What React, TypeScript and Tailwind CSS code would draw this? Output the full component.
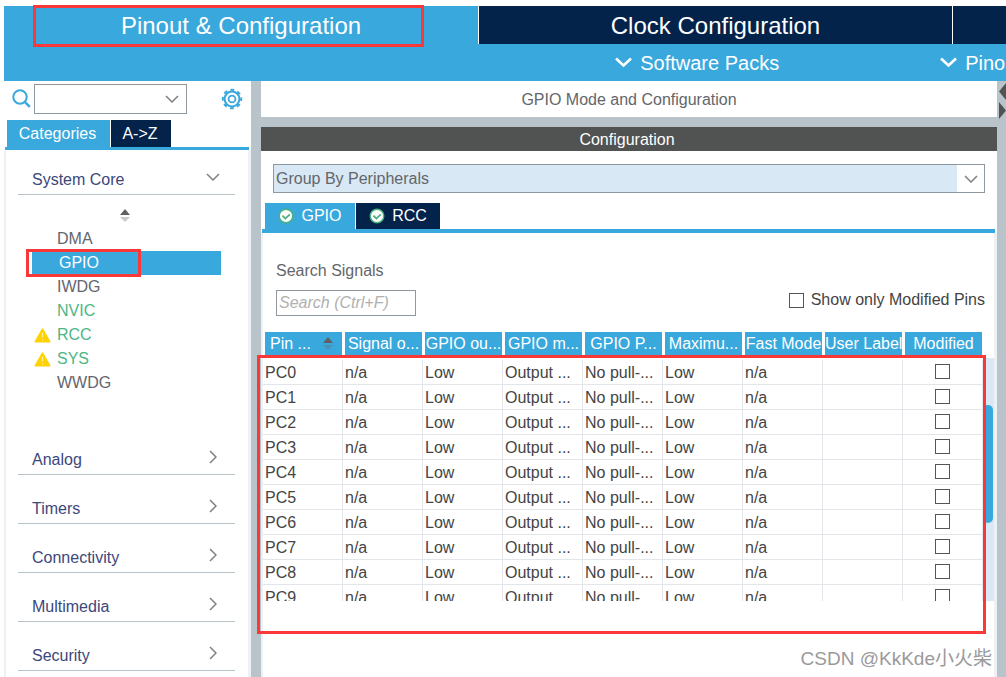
import React from "react";

const categories = ["Analog", "Timers", "Connectivity", "Multimedia", "Security"];

const coreItems = [
  { name: "DMA", state: "idle" },
  { name: "GPIO", state: "selected" },
  { name: "IWDG", state: "idle" },
  { name: "NVIC", state: "enabled" },
  { name: "RCC", state: "warning" },
  { name: "SYS", state: "warning" },
  { name: "WWDG", state: "idle" },
];

const columns = [
  "Pin ...",
  "Signal o...",
  "GPIO ou...",
  "GPIO m...",
  "GPIO P...",
  "Maximu...",
  "Fast Mode",
  "User Label",
  "Modified",
];

const pins = ["PC0", "PC1", "PC2", "PC3", "PC4", "PC5", "PC6", "PC7", "PC8", "PC9"];

const Chevron = ({ className = "", path = "M1 1l6 6 6-6", box = "0 0 14 8", width = 1.5 }) => (
  <svg className={className} viewBox={box} fill="none" stroke="currentColor" strokeWidth={width}>
    <path d={path} />
  </svg>
);

const SortArrows = ({ className = "", lower = "#c9c9c9" }) => (
  <svg className={className} viewBox="0 0 10 14">
    <path d="M5 0l5 6H0z" fill="#5f6264" />
    <path d="M0 8h10l-5 5z" fill={lower} />
  </svg>
);

const WarningIcon = () => (
  <svg className="w-[17px] h-[15px]" viewBox="0 0 17 15">
    <path d="M8.500 1.200L15.800 13.800H1.200z" fill="#ffd200" stroke="#ffd200" strokeWidth="1.600" strokeLinejoin="round" />
    <path d="M8.500 4.500v5M8.500 11v1.600" stroke="#ffeb90" strokeWidth="1.400" />
  </svg>
);

const CheckIcon = () => (
  <svg className="w-4 h-4" viewBox="0 0 16 16">
    <circle cx="8" cy="8" r="6.800" fill="#fff" stroke="#49b27c" strokeWidth="1.400" />
    <path d="M4.400 7.600l3 3L11.800 6.300" fill="none" stroke="#49b27c" strokeWidth="1.800" />
  </svg>
);

const GearIcon = () => (
  <svg className="w-[22px] h-[22px]" viewBox="0 0 22 22" fill="none" stroke="currentColor">
    <circle cx="11" cy="11" r="7.400" strokeWidth="2" />
    <circle cx="11" cy="11" r="3.400" strokeWidth="1.800" />
    {/* eight teeth round the rim */}
    <circle cx="11" cy="11" r="9.200" strokeWidth="2" strokeDasharray="3.800 3.425" strokeDashoffset="1.900" />
  </svg>
);

const Header = () => (
  <header className="ml-1 bg-[#39a8dc] text-white">
    <div className="grid grid-cols-[474fr_474fr_54fr]">
      <button className="relative h-[38px] pt-[2px] text-2xl">
        Pinout &amp; Configuration
        <span className="absolute -top-px left-[29px] right-[54px] h-[42px] border-3 border-[#fb3838]"></span>
      </button>
      <button className="h-[38px] border-l border-white bg-[#03234b] pt-[2px] text-2xl">Clock Configuration</button>
      <button className="h-[38px] border-l border-white bg-[#03234b]" aria-label="Project Manager"></button>
    </div>
    <div className="flex h-[37px] items-center gap-[161px] overflow-hidden whitespace-nowrap pl-[61%] text-xl">
      <button className="flex shrink-0 items-center gap-2">
        <Chevron className="w-[17px] h-[11px]" box="0 0 17 11" path="M1 1.500l7.500 7 7.500-7" width={2.6} />
        Software Packs
      </button>
      <button className="flex shrink-0 items-center gap-2">
        <Chevron className="w-[17px] h-[11px]" box="0 0 17 11" path="M1 1.500l7.500 7 7.500-7" width={2.6} />
        Pinout
      </button>
    </div>
  </header>
);

const Sidebar = () => (
  <aside className="ml-1 flex w-[247px] shrink-0 flex-col">
    <div className="flex h-[39px] items-center pl-2 pr-2 pb-1">
      <svg className="w-5 h-5 text-[#39a8dc]" viewBox="0 0 20 20" fill="none" stroke="currentColor">
        <circle cx="8" cy="8" r="6.700" strokeWidth="2" />
        <path d="M12.800 12.800l5 5" strokeWidth="2.400" />
      </svg>
      <div className="ml-[2px] flex h-[30px] w-[153px] items-center border border-[#8f989e] pr-[7px]">
        <input aria-label="Find peripheral" className="h-full min-w-0 flex-1 px-1 outline-none" />
        <button aria-label="Show matches">
          <Chevron className="w-[14px] h-2 text-[#808080]" />
        </button>
      </div>
      <button className="ml-auto text-[#39a8dc]" aria-label="Settings">
        <GearIcon />
      </button>
    </div>
    <div className="ml-px mr-[2px] flex gap-px border-b-3 border-[#39a8dc] pl-[2px] text-white">
      <button className="h-[27px] w-[103px] bg-[#39a8dc] pr-[2px]">Categories</button>
      <button className="h-[27px] w-[60px] bg-[#03234b] pr-[2px]">A-&gt;Z</button>
    </div>

    <nav className="flex-1 border-l-2 border-r-3 border-[#eef1f4] pl-3 pr-[13px]">
      <button className="flex h-[45px] w-full items-end border-b border-[#b8c4ca] pb-[2px] pl-[14px] pr-[15px] leading-6 text-[#3c477c]">
        System Core
        <Chevron className="mb-[11px] ml-auto w-[14px] h-2 text-[#808080]" />
      </button>
      <div className="flex h-8 items-end justify-center pb-1 pr-1">
        <SortArrows className="w-[10px] h-[14px]" />
      </div>
      <ul className="mb-[31px] ml-[14px] mr-[14px] leading-6">
        {coreItems.map(({ name, state }) => {
          if (state === "selected") {
            return (
              <li key={name} className="relative bg-[#39a8dc] text-white">
                <a href="#gpio" className="block pl-[27px]">{name}</a>
                <span className="absolute -left-[6px] -top-[2px] h-7 w-[115px] border-3 border-[#fb3838]"></span>
              </li>
            );
          }
          return (
            <li key={name} className={state === "idle" ? "text-[#63666f]" : "text-[#4db685]"}>
              <a href={`#${name.toLowerCase()}`} className="flex items-center">
                <span className="w-[25px] pl-[2px]">{state === "warning" && <WarningIcon />}</span>
                {name}
              </a>
            </li>
          );
        })}
      </ul>
      {categories.map((name) => (
        <button
          key={name}
          className="flex h-[49px] w-full items-end border-b border-[#b8c4ca] pb-[2px] pl-[14px] pr-[18px] leading-6 text-[#3c477c]"
        >
          {name}
          <Chevron className="mb-[8px] ml-auto w-2 h-[14px] text-[#808080]" box="0 0 8 14" path="M1 1l6 6-6 6" />
        </button>
      ))}
    </nav>
  </aside>
);

const PinTable = () => (
  <div className="relative">
    <div className="flex h-[269px] overflow-hidden">
      <table className="w-full min-w-0 flex-1 table-fixed border-separate border-spacing-0 self-start text-[#444]">
        <thead>
          <tr>
            {columns.map((name, idx) => (
              <th
                key={name}
                className="h-7 border-b-4 border-l-2 border-r border-white bg-[#39a8dc] p-0 font-normal leading-6 text-white whitespace-nowrap"
              >
                {idx === 0 ? (
                  <span className="flex items-center justify-between pl-[5px] pr-[9px]">
                    {name}
                    <SortArrows className="w-[10px] h-[14px]" lower="#4b91b4" />
                  </span>
                ) : (
                  name
                )}
              </th>
            ))}
          </tr>
        </thead>
        <tbody>
          {pins.map((pin) => (
            <tr key={pin}>
              {[pin, "n/a", "Low", "Output ...", "No pull-...", "Low", "n/a", ""].map((value, idx) => (
                <td key={idx} className="h-[25px] border-b border-r border-[#e2e5e9] p-0 pl-[2px] pt-px leading-[23px] whitespace-nowrap">
                  {value}
                </td>
              ))}
              <td className="h-[25px] border-b border-r border-[#e2e5e9] p-0 pb-[2px]">
                <input
                  type="checkbox"
                  aria-label={`${pin} modified`}
                  className="mx-auto block h-[15px] w-[15px] appearance-none border border-[#555]"
                />
              </td>
            </tr>
          ))}
        </tbody>
      </table>
      <div className="mt-[26px] w-[11px] bg-[#d8e8f5] pr-px pt-[47px]">
        <div className="h-[118px] rounded-md bg-[#39a8dc]"></div>
      </div>
    </div>
    <div className="absolute -left-[6px] right-2 top-[23px] h-[279px] border-3 border-[#fb3838]"></div>
  </div>
);

const ConfigurationPanel = () => (
  <section className="flex flex-1 flex-col bg-white">
    <h2 className="h-6 bg-[#515352] pr-1 text-center leading-[26px] text-white">Configuration</h2>
    <div className="relative mx-3 mt-[13px]">
      <select
        aria-label="Grouping"
        className="block h-[29px] w-full appearance-none border border-[#8f989e] bg-[#d8e8f5] px-[2px] text-[#63666a]"
      >
        <option>Group By Peripherals</option>
      </select>
      <span className="pointer-events-none absolute inset-y-px right-px flex w-[27px] items-center justify-center bg-white">
        <Chevron className="w-[14px] h-2 text-[#808080]" />
      </span>
    </div>
    <div className="ml-px mr-[2px] mt-[10px] flex gap-px border-b-4 border-[#39a8dc] pl-[3px] text-white">
      <button className="flex h-[26px] w-[90px] items-center justify-center gap-[7px] bg-[#39a8dc]">
        <CheckIcon />
        GPIO
      </button>
      <button className="flex h-[26px] w-[84px] items-center justify-center gap-[7px] bg-[#03234b]">
        <CheckIcon />
        RCC
      </button>
    </div>
    <div className="flex-1 border-l-2 border-r-3 border-[#eef1f4] pt-[26px]">
      <div className="flex items-end pl-[13px] pr-[9px]">
        <div>
          <label htmlFor="signals" className="block leading-6 text-[#63666a]">
            Search Signals
          </label>
          <input
            id="signals"
            placeholder="Search (Ctrl+F)"
            className="mt-[7px] block h-[26px] w-[140px] border border-[#8f989e] px-[2px] placeholder:italic placeholder:text-[#b0b0b0]"
          />
        </div>
        <label className="mb-[4px] ml-auto flex items-center gap-[7px] leading-6 text-[#444]">
          <input type="checkbox" className="h-[15px] w-[15px] appearance-none border border-[#555]" />
          Show only Modified Pins
        </label>
      </div>
      <div className="mt-4">
        <PinTable />
      </div>
    </div>
  </section>
);

const App: React.FC = () => {
  return (
    <div className="relative flex h-screen flex-col overflow-hidden bg-white pt-[6px] font-['Liberation_Sans','Noto_Sans_CJK_SC',sans-serif] text-base">
      <Header />
      <div className="flex min-h-0 flex-1">
        <Sidebar />
        <main className="flex min-w-0 flex-1 bg-[#b8c4ca] pl-[10px]">
          <div className="flex min-w-0 flex-1 flex-col gap-[10px]">
            <h1 className="h-9 bg-white text-center leading-[38px] text-[#63666a]">GPIO Mode and Configuration</h1>
            <ConfigurationPanel />
          </div>
          {/* Splitter arrows */}
          <div className="w-[9px] pl-[2px] pt-[2px]">
            <svg className="w-[7px] h-9" viewBox="0 0 7 36" fill="#515352">
              <path d="M7 0v17L0 8.500z" />
              <path d="M0 19l7 8.500L0 36z" />
            </svg>
          </div>
        </main>
      </div>
      <div className="absolute bottom-1 right-[14px] text-[19px] leading-7 text-[#9a9a9a]">CSDN @KkKde小火柴</div>
    </div>
  );
};

export default App;
